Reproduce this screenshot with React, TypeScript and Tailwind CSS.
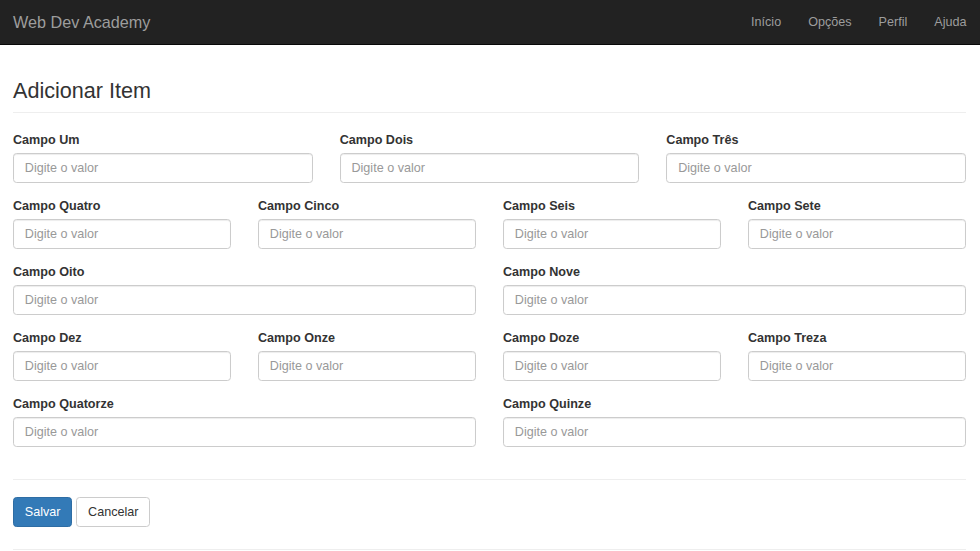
const font = { fontFamily: '"Liberation Sans", Arial, Helvetica, sans-serif' }

const rows: { cols: string; fields: string[] }[] = [
  { cols: 'grid-cols-3', fields: ['Campo Um', 'Campo Dois', 'Campo Três'] },
  { cols: 'grid-cols-4', fields: ['Campo Quatro', 'Campo Cinco', 'Campo Seis', 'Campo Sete'] },
  { cols: 'grid-cols-2', fields: ['Campo Oito', 'Campo Nove'] },
  { cols: 'grid-cols-4', fields: ['Campo Dez', 'Campo Onze', 'Campo Doze', 'Campo Treza'] },
  { cols: 'grid-cols-2', fields: ['Campo Quatorze', 'Campo Quinze'] },
]

function FormGroup({ label }: { label: string }) {
  return (
    <div className="flex flex-col mb-[14px]">
      <label className="text-[12.6px] leading-[18px] font-bold text-[#333] mb-[4px]">{label}</label>
      <input
        type="text"
        placeholder="Digite o valor"
        className="h-[30px] w-full px-[10.8px] text-[12.6px] text-[#555] placeholder:text-[#999] bg-white border border-[#ccc] rounded-[3.6px] shadow-[inset_0_1px_1px_rgba(0,0,0,0.075)] outline-none"
      />
    </div>
  )
}

export default function App() {
  return (
    <div className="min-h-[551px] bg-white" style={font}>
      {/* Navbar */}
      <nav className="h-[45px] bg-[#222] border-b border-[#080808] flex items-center">
        <div className="flex-1 pl-[13px] text-[16.2px] text-[#9d9d9d]">Web Dev Academy</div>
        <ul className="flex items-center text-[12.6px] text-[#9d9d9d]">
          {['Início', 'Opções', 'Perfil', 'Ajuda'].map(item => (
            <li key={item} className="px-[13.5px] leading-[18px]">{item}</li>
          ))}
        </ul>
      </nav>

      <div className="pl-[13px] pr-[14px]">
        {/* Page header */}
        <div className="mt-[34px] pb-[9px] border-b border-[#eee] mb-[18px]">
          <h3 className="text-[21.6px] leading-[24px] font-normal text-[#333]">Adicionar Item</h3>
        </div>

        {/* Form */}
        <form>
          {rows.map((row, i) => (
            <div key={i} className={`grid ${row.cols} gap-x-[27px]`}>
              {row.fields.map(f => (
                <FormGroup key={f} label={f} />
              ))}
            </div>
          ))}

          <hr className="mt-[18px] mb-[17px] border-0 border-t border-[#eee]" />

          <div className="flex gap-[4px] pb-[22px] border-b border-[#eee]">
            <button
              type="button"
              className="h-[30px] px-[10.8px] text-[12.6px] text-white bg-[#337ab7] border border-[#2e6da4] rounded-[3.6px]"
            >
              Salvar
            </button>
            <button
              type="button"
              className="h-[30px] px-[10.8px] text-[12.6px] text-[#333] bg-white border border-[#ccc] rounded-[3.6px]"
            >
              Cancelar
            </button>
          </div>
        </form>
      </div>
    </div>
  )
}
